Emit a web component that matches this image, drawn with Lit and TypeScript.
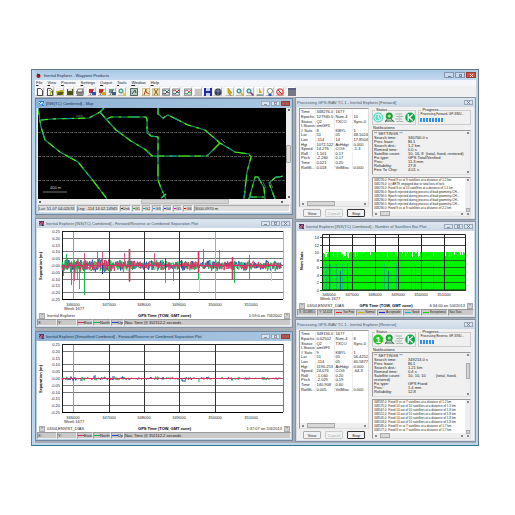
import { LitElement, html, svg, css, nothing } from "lit";
import { customElement, property } from "lit/decorators.js";

const base = css`
  * { box-sizing: border-box; }
  :host { display: block; font: 4px/5px "Liberation Sans", Arial, sans-serif; color: #222; }
  button { font: inherit; color: inherit; padding: 0; margin: 0; border: 0; background: none; }
  svg { display: block; }
`;

function random(seed: number) {
  let s = seed;
  return () => {
    s = (s * 16807) % 2147483647;
    return s / 2147483647;
  };
}

@customElement("mdi-window")
class MdiWindow extends LitElement {
  @property() heading = "";
  @property({ type: Boolean, reflect: true }) active = false;
  @property({ type: Boolean, reflect: true }) dialog = false;
  static styles = [base, css`
    .frame { border: 1px solid #8593a3; background: #d3deeb; padding-bottom: 1px; }
    :host([active]) .frame { background: #b4d0e9; border-color: #6f879f; }
    .title { height: 9px; display: flex; align-items: center; gap: 2px; padding: 0 2px 0 3px;
      background: linear-gradient(#dfe7f0, #cbd7e5); color: #4b5967; white-space: nowrap; }
    :host([active]) .title { background: linear-gradient(90deg, #8fb3d6, #a9c6e0); color: #1e3550; }
    .logo { width: 5px; height: 5px; flex: none; }
    .text { flex: 1; overflow: hidden; }
    .controls { display: flex; gap: 1px; }
    .controls button { width: 9px; height: 5px; border: 1px solid #9aa9b9; background: #dbe4ee; display: flex; justify-content: center; align-items: center; }
    :host([active]) .controls button:last-child { background: #c8503f; border-color: #94413b; }
    .controls svg { width: 3px; height: 3px; }
    .client { margin: 0 1px; background: #fff; }
    :host([dialog]) .frame { background: #d5dde6; }
    :host([dialog]) .client { background: #f0f0f0; }
    :host([dialog]) .logo { display: none; }
    :host([dialog]) .title { padding-left: 1px; }
  `];
  render() {
    const glyph = (d: string) => html`<svg viewBox="0 0 3 3"><path d=${d} fill="none" stroke="#5d6b78" stroke-width=".7"/></svg>`;
    return html`<section class="frame">
      <header class="title">
        <svg class="logo" viewBox="0 0 5 5"><path d="M0 0h5v5H0z" fill=${this.heading.endsWith("Map") ? "#1d7fd0" : "#51345f"}/><path d="M0 1l2 2 1-2 2 3" stroke=${this.heading.endsWith("Map") ? "#d8f6ff" : "#e3567e"} fill="none"/><path d="M0 4h3" stroke="#fff" stroke-width=".7"/></svg>
        <span class="text">${this.heading}</span>
        <span class="controls">
          ${this.dialog ? nothing : html`<button aria-label="Minimize">${glyph("M0 2.5h3")}</button><button aria-label="Maximize">${glyph("M.4.4h2.2v2.2H.4z")}</button>`}
          <button aria-label="Close">${glyph("M0 0l3 3M3 0L0 3")}</button>
        </span>
      </header>
      <div class="client"><slot></slot></div>
    </section>`;
  }
}

const tracks = [
  "M38 108L40 121 41 127 45 140 60 152 78 162 91 178 107 199",
  "M41 120L52 119 89 118 100 112 104 108",
  "M100 112L106 119 116 130 131 141 146 150 152 156H207L220 143",
  "M107 119L111 117H146L147 119V133L151 136 158 137V180L161 188 166 199M161 198L166 194",
  "M158 108V114L163 118 168 115 180 121 188 125 205 130 220 143 235 152 249 154 251 157 247 172 244 199",
  "M249 199L255 177H258L264 188 265 199M250 197H264",
  "M275 199L269 183 276 177H279L283 176",
];

@customElement("track-map")
class TrackMap extends LitElement {
  static styles = [base, css`
    .view { display: flex; padding-left: 1px; background: #eee; }
    .map { flex: 1; min-width: 0; background: #000; }
    .map svg { width: 100%; height: auto; }
    .map text { font-size: 4px; fill: #ccc; }
    .vbar { width: 5px; display: flex; flex-direction: column; align-items: center; justify-content: space-between; padding: 1px 0; color: #666; }
    .vthumb { width: 5px; height: 18px; border: 1px solid #aaa; background: #ddd; border-radius: 1px; }
    .hbar { height: 5px; background: #eee; display: flex; justify-content: space-between; align-items: center; padding: 0 8px 0 2px; color: #666; }
    .hthumb { width: 88px; height: 5px; border: 1px solid #bbb; background: #d4d4d4; margin-left: 48px; }
    .arrow { width: 2px; height: 2px; background: #666; }
    .status { height: 9px; background: #dedede; display: flex; align-items: center; gap: 1px; padding: 0 1px; white-space: nowrap; }
    .cell { border: 1px solid #aaa; border-right-color: #fff; border-bottom-color: #fff; height: 7px; display: flex; align-items: center; }
    .dash { width: 2px; height: 1px; flex: none; }
    .wide { flex: 1; }
  `];
  render() {
    const flags: [string, string][] = [["Unk", "#333"], ["G1", "#0b3"], ["G2", "#0aa"], ["G3", "#28f"], ["G4", "#33c"], ["G5", "#e0c"], ["G6", "#d00"]];
    return html`<div class="view">
        <div class="map"><svg viewBox="38 108 248 91">
          <path d="M38 132.500H285M38 156.500H285M38 180.500H285" stroke="#4c4c4c" stroke-dasharray="3 1"/>
          ${tracks.map((d) => svg`<path d=${d} fill="none" stroke="#159a62" stroke-width="1.200"/><path d=${d} fill="none" stroke="#45e808" stroke-width="1.200" stroke-dasharray="7 5 3 6 12 4"/><path d=${d} fill="none" stroke="#0c8fae" stroke-dasharray="3 22 6 31"/>`)}
          <path d="M76 116h7M147 130l4 5M221 139l4 4M263 182l3 6M270 182l3 6M163 119l4-4" stroke="#888" stroke-width=".7"/>
          <text x="50" y="189">400 m</text><path d="M43 192h24" stroke="#aaa" stroke-width=".7"/>
        </svg></div>
        <div class="vbar"><i class="arrow"></i><i class="vthumb"></i><i class="arrow"></i></div>
      </div>
      <div class="hbar"><i class="arrow"></i><i class="hthumb"></i><i class="arrow"></i></div>
      <div class="status"><span class="cell">Lat: 51 07 04.02074</span><span class="cell">Lng: -114 14 02.14945</span>
        ${flags.map(([n, c]) => html`<span class="cell"><i class="dash" style="background:${c}"></i>${n}</span>`)}
        <span class="cell wide">3000.0970 m</span></div>`;
  }
}

const rowStyles = css`
  .plot svg { width: 100%; height: auto; }
  .plot text { font-size: 4px; fill: #222; }
  .plot .axis { font-weight: bold; fill: #000; }
  .foot { height: 7px; display: grid; grid-template-columns: 1fr auto 1fr; align-items: center; padding: 0 1px 0 2px; white-space: nowrap; }
  .foot .left, .foot .right { display: flex; align-items: center; gap: 2px; }
  .foot .right { justify-content: flex-end; }
  .foot strong { color: #000; }
  .foot button { width: 6px; height: 6px; background: #d0d0d0; border: 1px solid #aaa; font-size: 4px; line-height: 3px; }
  .status { height: 7px; background: #c9c9c9; display: flex; white-space: nowrap; }
  .cell { border: 1px solid #999; border-right-color: #eee; border-bottom-color: #eee; line-height: 5px; display: flex; align-items: center; flex: none; }
  .key { width: 6px; height: 1px; flex: none; }
  .last { flex: 1; }
`;

function tick(label: string, x: number, y: number) {
  return svg`<text x=${x} y=${y} text-anchor="end">${label}</text>`;
}

@customElement("separation-plot")
class SeparationPlot extends LitElement {
  @property({ type: Boolean }) smooth = false;
  static styles = [base, rowStyles, css`.blank { width: 20px; }`];

  trace(seed: number, amp: number, density: number) {
    const r = random(seed);
    let d = "M62 265.500";
    for (let x = 62.5; x < 282; x += 0.7) {
      const burst = 0.6 + 0.6 * Math.abs(Math.sin(x / 9 + seed)) + (x < 125 ? 0.3 : 0);
      const y = r() < density ? (r() - 0.5) * amp * burst : 0;
      d += `L${x.toFixed(1)} ${(265.5 + y).toFixed(1)}`;
    }
    return d;
  }

  render() {
    const xs = [73, 109, 144, 179, 215, 251];
    const amp = this.smooth ? 3 : 9;
    const density = this.smooth ? 0.25 : 1;
    return html`<div class="plot"><svg viewBox="37 228 254 84">
        ${["0.25", "0.20", "0.15", "0.10", "0.05", "-0.00", "-0.05", "-0.10", "-0.15", "-0.20", "-0.25"].map((t, i) => tick(t, 60, 233 + Math.round(i * 6.8)))}
        <path d="M62 238.500H283M62 251.500H283M62 258.500H283M62 265.500H283M62 272.500H283M62 279.500H283M62 292.500H283" stroke="#777"/>
        ${xs.slice(0, 5).map((x, i) => svg`<path d="M${x + 0.5} 231V299" stroke=${i === 4 && !this.smooth ? "#aaa" : i === 0 ? "#999" : "#333"}/>`)}
        <path d="M62 231.500H283" stroke="#222"/><path d="M62.500 231V300" stroke="#222"/>
        <path d="M283.500 231V299" stroke=${this.smooth ? "#777" : "#f29a9a"}/><path d="M62 299.500H283" stroke="#000"/>
        <path d=${this.trace(91, amp, density)} fill="none" stroke="#1648a8" stroke-width=".9"/>
        <path d=${this.trace(427, amp * 1.1, density)} fill="none" stroke="#14b84a" stroke-width=".9"/>
        <path d=${this.trace(1733, amp * 0.9, this.smooth ? 0.1 : 0.9)} fill="none" stroke="#dc2f61" stroke-width=".9"/>
        <path d="M62 265.500H282" stroke="#dc2f61"/>
        ${this.smooth
          ? svg`<path d="M75 266v-2M81 266v2M94 265v-2h2M112 264h3M163 265v2M182 265v3h4" fill="none" stroke="#1648a8"/><path d="M82 265v3M116 264v3M199 265v4M232 265v3M269 265v2" stroke="#14b84a"/>`
          : svg`<path d="M66.500 266V254M71.500 267V285M97.500 265V251M173.500 266v15M203.500 266V249M198.500 266v14M234.500 266v17" stroke="#14b84a"/>
            <path d="M84.500 262V295M129.500 252V282" stroke="#14b84a" stroke-width="1.200"/>
            <path d="M63.500 264V276M74.500 266v15M79.500 266v23M77.500 266v14M84.500 253v16M102.500 266V252M124.500 266V253M165.500 266v17M219.500 266V250M232.500 265v15M249.500 255v24M154.500 264V253M67.500 258v12" stroke="#dc2f61" stroke-width=".8"/>
            <path d="M129.500 249V281M198.500 251v22M232.500 257v22" stroke="#dc2f61" stroke-width="1.600"/>
            <path d="M199.500 272v22M271.500 266v15" stroke="#f5bfd0"/><path d="M102.500 265v9M165.500 258v12M181.500 260v8" stroke="#1648a8"/>`}
        ${xs.map((x, i) => svg`<text x=${x} y="306" text-anchor="middle">${346 + i}000</text>`)}
        <text x="64" y="310">Week 1677</text>
        <text class="axis" transform="translate(42 280) rotate(-90)">Separation (m)</text>
      </svg></div>
      <div class="foot"><span class="left"><button>*</button>${this.smooth ? "03/04,ENVIST_DIAS" : "Inertial Explorer"}</span><strong>GPS Time (TOW, GMT zone)</strong><span class="right">${this.smooth ? "1:37:07 on 5/4/2013" : "1:59:0 on 7/4/2002"}<button>*</button></span></div>
      <div class="status"><span class="cell blank">X:</span><span class="cell blank">Y:</span>
        ${[["East", "#e0285c"], ["North", "#14b84a"], ["Up", "#1648c8"]].map(([n, c]) => html`<span class="cell"><i class="key" style="background:${c}"></i>${n}</span>`)}
        <span class="cell last">Nav. Time @ 352112.2 seconds</span></div>`;
  }
}

@customElement("satellite-plot")
class SatellitePlot extends LitElement {
  static styles = [base, rowStyles, css`
    .status { font-size: 3px; }
    .status .cell { padding: 0 1px; }
    .key { margin-right: 1px; }
  `];
  render() {
    const r = random(77);
    const xs = [329, 352, 375, 398, 421, 444];
    let gaps = "";
    for (let x = 323; x < 466; x++) {
      if (r() < (x < 350 || x > 432 ? 0.35 : 0.16)) gaps += `M${x}.500 253v${1 + Math.floor(r() * 5)}`;
    }
    return html`<div class="plot"><svg viewBox="297 232 177 71">
        <rect x="322" y="253" width="144" height="38" fill="#00f500"/>
        <path d=${gaps} stroke="#e9ffe9"/>
        <path d="M326.500 254v4M337.500 254v4M348.500 254v5M418.500 253v5M445.500 253v4" stroke="#f4fff4"/>
        <path d="M326.500 265v26M330.500 265v26M336.500 265v26M342.500 265v26M384.500 265v26M396.500 264v26M411.500 270v21M415.500 265v26M433.500 265v26" stroke="#15bf72"/>
        <path d="M340.500 272v19M347.500 264v27M388.500 272v19" stroke="#08748c"/>
        ${[14, 12, 10, 8, 6, 4, 2, 0].map((n, i) => {
          const y = 238 + Math.round(i * 7.5);
          return svg`<path d="M320 ${y + 0.5}H466" stroke=${i > 2 ? "#176b17" : "#444"} stroke-width=${i === 2 ? 0 : 1}/>${tick(String(n), 319, y + 2)}`;
        })}
        ${xs.map((x, i) => svg`<path d="M${x + 0.5} 235V291" stroke="#222"/><text x=${x} y="297" text-anchor="middle">${346 + i}000</text>`)}
        <path d="M322.500 235.500H465.500V291H322.500z" fill="none" stroke="#222"/>
        <text x="320" y="301">Week 1677</text>
        <text class="axis" transform="translate(303 271) rotate(-90)">Num Sats</text>
      </svg></div>
      <div class="foot"><span class="left"><button>*</button>03/04,ENVIST_DIAS</span><strong>GPS Time (TOW, GMT zone)</strong><span class="right">6:34:00 on 5/4/2013<button>*</button></span></div>
      <div class="status"><span class="cell">X: 351888.0</span><span class="cell">Y: 14.424</span>
        ${[["Too Few", "#f22"], ["Normal", "#c9b400"], ["Acceptable", "#22e"], ["Good", "#0bc"], ["Exceptional", "#0d0"]].map(([n, c]) => html`<span class="cell"><i class="key" style="background:${c}"></i>${n}</span>`)}
        <span class="cell last">Nav Sats</span></div>`;
  }
}

interface Run {
  rows: string[][];
  notes: string[][];
  events: string[];
  progress: string;
  blocks: number;
  first: boolean;
}

const forward: Run = {
  rows: [["Time", "348276.0", "1677"], ["Epochs", "127940.0", "Num-4", "10"], ["Status", "Q2", "TXCO", "Sync-0"], ["I-Status", "amGF3"], ["# Sats", "8", "KBYL", "1"], ["Lat", "51", "05", "48.1024"], ["Lon", "-114", "14", "17.8504"], ["Hgt", "1072.522", "AvHdgt", "0.000"], ["Speed", "14.276", "COG", "-1.3"], ["Roll", "1.101", "0.17"], ["Pitch", "-2.260", "0.17"], ["Time", "0.021", "0.20"], ["RotMi...", "0.018", "VelMisc", "0.000"]],
  notes: [["** SETTINGS **"], ["Search time:", "340760.0 s"], ["Prev. base:", "BL1"], ["Search dist.:", "1.2 km"], ["Remind time:", "0.0 s"], ["Satellite count:", "10, 16, 8  (total, fixed, restored)"], ["Fix type:", "GPS Total/Verified"], ["Prec:", "11.3 mm"], ["Reliability:", "27.8"], ["Fine To Chip:", "4.01 s"]],
  events: ["348276.0: Fixed 9 sv at 9 satellites at a distance of 1.2 km", "348276.0: (c) ARTK engaged due to total loss of lock", "348276.0: Fixed 9 sv at 10 satellites at a distance of 1.1 km", "348290.0: Epoch rejected during process of bad geometry-CH...", "348290.0: Epoch rejected during process of bad geometry-CH...", "348290.0: Epoch rejected during process of bad geometry-CH...", "348290.0: Epoch rejected during process of bad geometry-CH...", "348290.0: Fixed 9 sv at 9 satellites at a distance of 2.2 km"],
  progress: "Processing Forward, GP-SINU...",
  blocks: 8,
  first: false,
};

const reverse: Run = {
  rows: [["Time", "348194.0", "1677"], ["Epochs", "0.02502", "Num-4", "8"], ["Status", "Q2", "TXCO", "Sync-0"], ["I-Status", "amGF3"], ["# Sats", "9", "KBYL", "1"], ["Lat", "51", "05", "56.4252"], ["Lon", "-114", "05", "40.5877"], ["Hgt", "1190.253", "AvHdgt", "0.000"], ["Speed", "24.076", "COG", "-64.3"], ["Roll", "-1.040", "0.20"], ["Pitch", "-2.029", "0.19"], ["Time", "140.908", "0.60"], ["RotMi...", "0.005", "VelMisc", "0.000"]],
  notes: [["** SETTINGS **"], ["Search time:", "349213.0 s"], ["Prev. base:", "BL1"], ["Search dist.:", "1.21 km"], ["Remind time:", "0.4 s"], ["Satellite count:", "10, 10, 10         (total, fixed,"], ["restored)"], ["Fix type:", "GPS Fixed"], ["Prec:", "1.4 mm"], ["Reliability:", "12.8"]],
  events: ["348587.0: Fixed 8 sv at 7 satellites at a distance of 1.2 km", "348575.0: Fixed 14 out of 10 satellites at a distance of 1.5 km", "348567.0: Fixed 14 out of 10 satellites at a distance of 1.9 km", "348551.0: Fixed 14 out of 10 satellites at a distance of 1.8 km", "348545.0: Fixed 14 out of 10 satellites at a distance of 1.8 km", "348533.0: Fixed 14 out of 10 satellites at a distance of 1.8 km", "348585.0: Fixed 8 sv at 7 satellites at a distance of 1.7 km", "348577.0: Fixed 8 sv at 7 satellites at a distance of 1.7 km"],
  progress: "Processing Reverse, GP-SINU...",
  blocks: 5,
  first: true,
};

@customElement("processing-panel")
class ProcessingPanel extends LitElement {
  @property({ attribute: false }) run: Run = forward;
  static styles = [base, css`
    .panel { display: grid; grid-template-columns: minmax(0, 70fr) minmax(0, 99fr); gap: 3px; padding: 1px 3px 1px 2px; }
    .list { background: #fff; border: 1px solid #999; border-right-color: #ddd; border-bottom-color: #ddd; height: 99px; display: flex; flex-direction: column; justify-content: space-between; }
    table { border-collapse: collapse; table-layout: fixed; width: 100%; height: 60px; margin-top: 1px; line-height: 4px; }
    td { padding: 0 0 0 1px; white-space: nowrap; border-right: 1px solid #eee; }
    td:last-child { border-right: 0; }
    .c1 { width: 15px; } .c2 { width: 19px; } .c3 { width: 18px; }
    .scroll { height: 5px; background: #eee; display: flex; align-items: center; justify-content: space-between; padding: 0 2px; flex: none; }
    .scroll i { width: 2px; height: 2px; background: #888; }
    .scroll .thumb { width: 28px; height: 5px; background: #d8d8d8; border: 1px solid #aaa; margin-right: auto; margin-left: 3px; }
    .scroll .short { width: 10px; }
    .buttons { display: flex; gap: 4px; padding-left: 4px; margin-top: 2px; }
    .buttons button { width: 18px; height: 8px; border: 1px solid #aaa; background: #f2f2f2; border-radius: 1px; line-height: 5px; }
    .buttons button:disabled { color: #aaa; border-color: #ccc; }
    .buttons .stop { border-color: #333; text-decoration: underline; }
    .groups { display: grid; grid-template-columns: minmax(0, 44fr) minmax(0, 52fr); gap: 2px; }
    fieldset { margin: 0; padding: 0; border: 1px solid #ccc; height: 17px; min-width: 0; }
    legend { padding: 0 1px; margin-left: 2px; line-height: 4px; }
    .icons { width: 100%; height: 11px; }
    .icons text { font-size: 9px; font-weight: bold; fill: #fff; text-anchor: middle; }
    .job { white-space: nowrap; line-height: 5px; font-size: 3px; padding-left: 1px; }
    .bar { display: flex; gap: 1px; height: 4px; margin: 1px 0 0 1px; }
    .bar i { width: 2px; background: #2f8ff0; }
    .label { line-height: 5px; padding-left: 1px; }
    .notes { height: 45px; background: #f0f0f0; border: 1px solid #999; border-right-color: #ddd; border-bottom-color: #ddd; display: flex; line-height: 4px; }
    .lines { flex: 1; margin: 0; min-width: 0; padding: 1px 1px 0; }
    .line { display: grid; grid-template-columns: 34px 1fr; white-space: pre; height: 4px; }
    .side { width: 5px; background: #eee; display: flex; flex-direction: column; justify-content: space-between; align-items: center; padding: 1px 0; flex: none; }
    .side i { width: 2px; height: 2px; background: #888; }
    .side .grip { width: 4px; height: 16px; background: #d4d4d4; border: 1px solid #aaa; margin-bottom: 8px; }
    .side .low { height: 4px; margin: auto 0 1px; }
    .events { display: flex; height: 40px; margin-top: 2px; background: #fff; border: 1px solid #999; border-right-color: #ddd; border-bottom-color: #ddd; line-height: 4px; font-size: 3px; }
    .text { flex: 1; min-width: 0; display: flex; flex-direction: column; justify-content: space-between; }
    ul { list-style: none; margin: 0; padding: 0 0 0 1px; white-space: nowrap; }
  `];
  render() {
    const { rows, notes, events, progress, blocks, first } = this.run;
    return html`<div class="panel">
      <div>
        <div class="list">
          <table><colgroup><col class="c1"><col class="c2"><col class="c3"><col></colgroup>
            <tbody>${rows.map((row) => html`<tr>${[0, 1, 2, 3].map((i) => html`<td>${row[i] ?? ""}</td>`)}</tr>`)}</tbody></table>
          <div class="scroll"><i></i><i class="thumb"></i><i></i></div>
        </div>
        <div class="buttons"><button>View</button><button disabled>Cancel</button><button class="stop">Stop</button></div>
      </div>
      <div>
        <div class="groups">
          <fieldset><legend>Status</legend>
            <svg class="icons" viewBox="0 0 42 11">
              <circle cx="5" cy="5.500" r="5" fill=${first ? "#27c322" : "#5fdcc4"}/>
              ${first ? svg`<text x="5" y="9">1</text>` : svg`<circle cx="5" cy="5.500" r="3.400" fill="none" stroke="#eafff8"/><path d="M5 3v3l2 1.500" fill="none" stroke="#fff"/>`}
              <circle cx="16" cy="4" r="3.500" fill="#1f9e35"/><circle cx="16" cy="4" r="1.600" fill="#a5e8a4"/><path d="M12 9h8M14 7l-2 3M18 7l3 3" stroke="#31664a"/>
              <path d="M22 2h7M23 4.500h7M22 7h7M23 9.500h7" stroke="#a9b2a9"/><path d="M26 1v9" stroke="#c5ccc5"/>
              <circle cx="37" cy="5.500" r="5" fill="#10a64a"/><path d="M35 2v7M39.500 2.500L36 5.500l3.500 3" fill="none" stroke="#fff" stroke-width="1.300"/>
            </svg></fieldset>
          <fieldset><legend>Progress</legend><div class="job">${progress}</div>
            <div class="bar" role="progressbar" aria-label="Progress">${Array.from({ length: blocks }, () => html`<i></i>`)}</div></fieldset>
        </div>
        <div class="label">Notifications</div>
        <div class="notes"><div class="lines">${notes.map((n) => html`<div class="line"><span>${n[0]}</span><span>${n[1] ?? ""}</span></div>`)}</div>
          <div class="side"><i></i>${first ? html`<i class="grip"></i>` : nothing}<i></i></div></div>
        <div class="events"><div class="text"><ul>${events.map((e) => html`<li>${e}</li>`)}</ul>
            <div class="scroll"><i></i><i class="thumb short"></i><i></i></div></div>
          <div class="side"><i></i><i class="grip low"></i><i></i></div></div>
      </div>
    </div>`;
  }
}

const page = svg`<path d="M1.500.5h3l2 2v5h-5z" fill="#fff" stroke="#222" stroke-width=".8"/>`;
const network = (a: string, b: string) => svg`<path d="M1 1h4v4H1z" fill=${a}/><path d="M4 4h4v3H4z" fill=${b}/><path d="M2 7l4-6" stroke="#444" stroke-width=".7"/>`;
const chart = (a: string, b: string) => svg`<path d="M.5 1h7v6h-7z" fill="#e5eee8" stroke="#667" stroke-width=".7"/><path d="M1 3l2-1 2 2 2-2" fill="none" stroke=${a} stroke-width=".9"/><path d="M1 5l2 1 2-2 2 1" fill="none" stroke=${b} stroke-width=".9"/>`;
const lens = (c: string) => svg`<circle cx="3" cy="3" r="2" fill="#b8f0e8" stroke="#257878"/><path d="M4.500 4.500L7.500 7.500" stroke=${c} stroke-width="1.500"/>`;
const tools: { name: string; gap?: boolean; icon: unknown }[] = [
  { name: "New", icon: page },
  { name: "New wizard", icon: svg`${page}<path d="M3 2l3 2-2 1 1 2" stroke="#a4a000" fill="none"/>` },
  { name: "Open", icon: svg`<path d="M0 3h3l1-1h3v5H1z" fill="#b5ac21"/><path d="M2 4h6L6 7H1z" fill="#555a12"/>` },
  { name: "Save", icon: svg`<path d="M1 1h6v6H1z" fill="#4b5212"/><path d="M2 1h4v2H2z" fill="#ddd"/>` },
  { name: "Print", icon: svg`<path d="M0 3h8v3H0z" fill="#888"/><path d="M2 1h5L6 4H1z" fill="#eee" stroke="#444" stroke-width=".6"/><path d="M1 7h6" stroke="#333"/>` },
  { name: "Process GNSS", gap: true, icon: network("#c5273d", "#3551c0") },
  { name: "Process loosely coupled", icon: network("#c92b2b", "#e1a01a") },
  { name: "Process tightly coupled", icon: network("#6e948e", "#455b77") },
  { name: "Find", icon: lens("#d9c420") },
  { name: "Grid", gap: true, icon: svg`<path d="M.5.5h7v7h-7z" fill="#b9ccc1" stroke="#526b62"/><path d="M2 6l3-4 1 3" fill="none" stroke="#36574d"/>` },
  { name: "Export", gap: true, icon: svg`<path d="M.5.5h7v7h-7z" fill="#f5edb5" stroke="#b9aa73" stroke-width=".6"/><path d="M2 7l2-6v3l3 2" fill="none" stroke="#b4402e"/>` },
  { name: "Export wizard", icon: svg`<path d="M.5.5h7v7h-7z" fill="#eee0a0" stroke="#b9aa73" stroke-width=".6"/><path d="M2 7l2-3 2 3M2 1l2 3 2-3" fill="none" stroke="#775a2e"/>` },
  { name: "View map", icon: chart("#3b6655", "#333") },
  { name: "View plots", icon: chart("#b42525", "#1b4c66") },
  { name: "Plot results", gap: true, icon: chart("#e36", "#16a34a") },
  { name: "Stack", icon: svg`<path d="M1 2h6M1 4h6M1 6h6" stroke="#999"/>` },
  { name: "Save view", icon: svg`<path d="M0 0h8v8H0z" fill="#1d2fa3"/><path d="M2 0h4v3H2zM2 5h4v3H2z" fill="#cbd1ff"/>` },
  { name: "Globe", icon: svg`<circle cx="4" cy="4" r="3.500" fill="#343955"/><path d="M1 3h6M4 1v6" stroke="#9ac" stroke-width=".7"/>` },
  { name: "Select", gap: true, icon: svg`<path d="M2 0l4 5H4l1 3-3-3z" fill="#d5b300" stroke="#846c00" stroke-width=".4"/>` },
  { name: "Zoom in", icon: lens("#c7b51b") },
  { name: "Zoom out", icon: lens("#7e2d69") },
  { name: "Measure", icon: svg`<path d="M3 0l3 5H3z" fill="#d5b300"/><path d="M1 7h6" stroke="#4b7777"/>` },
  { name: "Tips", icon: svg`<circle cx="4" cy="3" r="2.500" fill="#fff" stroke="#555" stroke-width=".7"/><path d="M2.500 6h3v2h-3z" fill="#235ac9"/>` },
  { name: "Stop", icon: svg`<circle cx="4" cy="4" r="3.200" fill="#fff" stroke="#dc2929"/><path d="M2 2l4 4M2 5h3" stroke="#dc2929"/>` },
  { name: "Panel", gap: true, icon: svg`<path d="M0 0h8v8H0z" fill="#777884"/><path d="M0 1h8" stroke="#444b78"/>` },
];

@customElement("app-root")
class AppRoot extends LitElement {
  static styles = [base, css`
    :host { background: #fff; padding: 69px 36px 60px 31px; }
    .app { border: 1px solid #64798e; border-bottom: 1px solid #277c8c; background: #bcd5ed; padding: 0 2px 2px 3px; }
    .title { height: 10px; display: flex; align-items: center; gap: 3px; padding-left: 1px; background: linear-gradient(#aac9e5, #c3d9ee); color: #182c42; }
    .title h1 { font: inherit; margin: 0; flex: 1; }
    .mark { width: 5px; height: 5px; }
    .controls { display: flex; gap: 1px; }
    .controls button { width: 10px; height: 6px; border: 1px solid #8298ae; background: #c7d9ea; display: flex; align-items: center; justify-content: center; }
    .controls svg { width: 3px; height: 3px; }
    .controls .close { background: #cf5540; border-color: #963f37; }
    nav { height: 6px; background: #f4f6fa; display: flex; gap: 4px; padding-left: 1px; }
    nav button { line-height: 6px; padding-right: 1px; }
    nav button::first-letter { text-decoration: underline; }
    .tools { height: 11px; background: #f0f0f0; display: flex; align-items: center; gap: 1px; }
    .tool { width: 9px; height: 9px; border: 1px solid #bbb; border-top-color: #fff; border-left-color: #fff; background: #eee; display: flex; align-items: center; justify-content: center; }
    .tool svg { width: 8px; height: 8px; flex: none; }
    .gap { width: 1px; }
    .desk { background: #a9adb2; display: grid; grid-template-columns: minmax(0, 258fr) minmax(0, 181fr); gap: 2px; align-items: start; padding-bottom: 1px; }
    .left { display: flex; flex-direction: column; gap: 3px; padding-top: 1px; }
    .right { display: flex; flex-direction: column; gap: 1px; }
  `];
  render() {
    const glyph = (d: string, c: string) => html`<svg viewBox="0 0 3 3"><path d=${d} fill="none" stroke=${c} stroke-width=".7"/></svg>`;
    return html`<main class="app">
      <header class="title"><svg class="mark" viewBox="0 0 5 5"><circle cx="2.500" cy="3" r="2" fill="#b3131b"/><path d="M1 1l3 1" stroke="#222"/></svg>
        <h1>Inertial Explorer - Waypoint Products</h1>
        <span class="controls"><button aria-label="Minimize">${glyph("M0 2.5h3", "#456")}</button><button aria-label="Restore">${glyph("M.4.4h2.2v2.2H.4z", "#456")}</button><button class="close" aria-label="Close">${glyph("M0 0l3 3M3 0L0 3", "#fff")}</button></span>
      </header>
      <nav>${["File", "View", "Process", "Settings", "Output", "Tools", "Window", "Help"].map((m) => html`<button>${m}</button>`)}</nav>
      <div class="tools">${tools.map((t) => html`${t.gap ? html`<i class="gap"></i>` : nothing}<button class="tool" aria-label=${t.name}><svg viewBox="0 0 8 8">${t.icon}</svg></button>`)}</div>
      <div class="desk">
        <div class="left">
          <mdi-window active heading="[INS(TC) Combined] - Map"><track-map></track-map></mdi-window>
          <mdi-window heading="Inertial Explorer [INS(TC) Combined] - Forward/Reverse or Combined Separation Plot"><separation-plot></separation-plot></mdi-window>
          <mdi-window active heading="Inertial Explorer [Smoothed Combined] - Forward/Reverse or Combined Separation Plot"><separation-plot smooth></separation-plot></mdi-window>
        </div>
        <div class="right">
          <mdi-window dialog heading="Processing GPS-INAV TC 1 - Inertial Explorer [Forward]"><processing-panel .run=${forward}></processing-panel></mdi-window>
          <mdi-window heading="Inertial Explorer [INS(TC) Combined] - Number of Satellites Bar Plot"><satellite-plot></satellite-plot></mdi-window>
          <mdi-window dialog heading="Processing GPS-INAV TC 1 - Inertial Explorer [Reverse]"><processing-panel .run=${reverse}></processing-panel></mdi-window>
        </div>
      </div>
    </main>`;
  }
}
